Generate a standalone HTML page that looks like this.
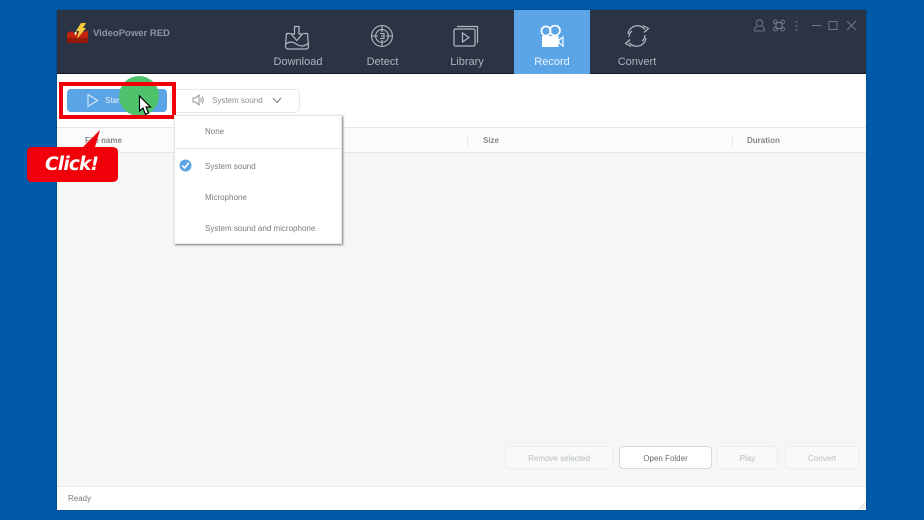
<!DOCTYPE html>
<html><head><meta charset="utf-8">
<style>
html,body{margin:0;padding:0;}
body{width:924px;height:520px;overflow:hidden;background:#0059a9;position:relative;font-family:"Liberation Sans",sans-serif;}
#w{position:absolute;left:0;top:0;width:924px;height:520px;background:#0059a9;overflow:hidden;filter:blur(.3px);}
.a{position:absolute;}
.t{position:absolute;white-space:nowrap;line-height:12px;}
.tab{position:absolute;top:56px;color:#aeb4bc;font-size:11px;line-height:12px;white-space:nowrap;transform:translateX(-50%);}
.m{position:absolute;left:205px;font-size:8px;color:#777c80;line-height:10px;white-space:nowrap;}
.b{position:absolute;top:446px;height:21px;border:1px solid #eceeee;border-radius:4px;background:#f8f9f9;color:#b9bdbf;font-size:8px;line-height:23px;text-align:center;box-sizing:content-box;}
.h{position:absolute;top:136px;font-size:8px;font-weight:bold;color:#83888c;line-height:10px;white-space:nowrap;}
</style></head>
<body>
<div id="w">
<div class="a" style="left:57px;top:10px;width:809px;height:500px;background:#fff;box-shadow:0 0 1px #123;"></div>
<div class="a" style="left:57px;top:10px;width:809px;height:64px;background:#2a3444;border-bottom:0;"></div>
<div class="a" style="left:57px;top:73px;width:809px;height:1px;background:#14181f;"></div>
<div class="a" style="left:514px;top:10px;width:76px;height:63.5px;background:#5ba4e6;"></div>

<!-- logo -->
<svg class="a" style="left:66px;top:22px" width="24" height="23" viewBox="0 0 24 23">
<path d="M1 11 L6 9 L8 11 L16 10 L22 9 L22 21 L1 21Z" fill="#c0220f"/>
<path d="M1 16 H22 V21 H1Z" fill="#8f1a0c"/>
<path d="M15 1 L20 1 L17 6 L20 6 L11 17 L13 9 L10 9Z" fill="#f4c93a"/>
<path d="M8 11 L11 9 L10 14Z" fill="#f6e9b0"/>
</svg>
<div class="t" style="left:93px;top:28px;font-size:9.5px;font-weight:bold;color:#8f96a0;">VideoPower RED</div>

<!-- tab icons -->
<svg class="a" style="left:283px;top:24px" width="28" height="28" viewBox="0 0 28 28" fill="none" stroke="#b4b9c0" stroke-width="1.2">
<path d="M11.5 2.5 H16 V10 H19.5 L13.8 16.5 L8 10 H11.5Z"/>
<path d="M7.5 9.5 H3.5 L2.5 22 Q2.5 25 5 25 H23 Q25.5 25 25.5 22 L24.5 9.5 H20.5"/>
<path d="M3 20 Q8 16 14 20.5 Q20 24 25 19.5"/>
</svg>
<svg class="a" style="left:370px;top:24px" width="24" height="24" viewBox="0 0 24 24" fill="none" stroke="#b4b9c0" stroke-width="1.1">
<circle cx="12" cy="12" r="10.4"/>
<circle cx="12" cy="12" r="6.4"/>
<path d="M12 1.5 V8 M12 16 V22.5 M1.5 12 H8 M16 12 H22.5"/>
<path d="M10 9.5 H14 V12 H11 M14 12 V14.5 H10"/>
</svg>
<svg class="a" style="left:453px;top:25px" width="27" height="22" viewBox="0 0 27 22" fill="none" stroke="#b4b9c0" stroke-width="1.2">
<rect x="1" y="4" width="21" height="17" rx="1.5"/>
<path d="M4 1.5 H24.5 V18"/>
<path d="M9.5 8 L16 12.5 L9.5 17Z"/>
</svg>
<svg class="a" style="left:540px;top:25px" width="24" height="23" viewBox="0 0 24 23">
<circle cx="6" cy="6" r="4.6" fill="none" stroke="#fff" stroke-width="1.7"/>
<circle cx="15" cy="5.5" r="5" fill="none" stroke="#fff" stroke-width="1.7"/>
<rect x="2" y="11" width="16.5" height="11" fill="#fff"/>
<path d="M19 15 L23 12 V21 L19 18Z" fill="none" stroke="#fff" stroke-width="1.2"/>
</svg>
<svg class="a" style="left:624px;top:24px" width="26" height="24" viewBox="0 0 26 24" fill="none" stroke="#b4b9c0" stroke-width="1.2">
<path d="M4 10 A9.5 9.5 0 0 1 21 5.5"/>
<path d="M19 1.5 L24.5 4.5 L20 8.5"/>
<path d="M22 14 A9.5 9.5 0 0 1 5 18.5"/>
<path d="M7 22.5 L1.5 19.5 L6 15.5"/>
<path d="M8 7 A7.5 7.5 0 0 0 5 13 M18 17 A7.5 7.5 0 0 0 21 11"/>
</svg>
<div class="tab" style="left:298px;">Download</div>
<div class="tab" style="left:382.5px;">Detect</div>
<div class="tab" style="left:467px;">Library</div>
<div class="tab" style="left:552px;color:#eaf3fc;">Record</div>
<div class="tab" style="left:637px;">Convert</div>

<!-- window controls -->
<svg class="a" style="left:752px;top:18px" width="108" height="16" viewBox="0 0 108 16" fill="none" stroke="#6f7782" stroke-width="1">
<circle cx="7.5" cy="5" r="3.2"/>
<path d="M2.5 13 Q2 9.5 5 8.5 M12.5 13 Q13 9.5 10 8.5 M2.5 13 H12.5"/>
<rect x="24" y="4.5" width="6" height="6"/>
<circle cx="23.5" cy="4" r="2"/><circle cx="30.5" cy="4" r="2"/><circle cx="23.5" cy="11" r="2"/><circle cx="30.5" cy="11" r="2"/>
<path d="M44.5 3 V4.5 M44.5 7 V8.5 M44.5 11 V12.5" stroke-width="1.6"/>
<path d="M60 7.5 H69"/>
<rect x="77" y="3.5" width="8" height="8"/>
<path d="M95 3 L104 12 M104 3 L95 12"/>
</svg>

<!-- sound dropdown -->
<div class="a" style="left:170px;top:89px;width:128px;height:22px;border:1px solid #e6e8e9;border-radius:5px;background:#fff;box-sizing:content-box;"></div>
<svg class="a" style="left:192px;top:94px" width="13" height="12" viewBox="0 0 13 12" fill="none" stroke="#8a8f94" stroke-width=".9">
<path d="M1 4 H3.5 L7 1 V11 L3.5 8 H1Z"/>
<path d="M8.5 4 Q10 6 8.5 8 M10 2.5 Q12.5 6 10 9.5"/>
</svg>
<div class="t" style="left:212px;top:95px;font-size:8px;color:#8a8f93;">System sound</div>
<svg class="a" style="left:272px;top:97px" width="10" height="7" viewBox="0 0 10 7" fill="none" stroke="#777c80" stroke-width="1"><path d="M1 1 L5 5.5 L9 1"/></svg>

<!-- table -->
<div class="a" style="left:57px;top:127px;width:809px;height:1px;background:#e4e6e7;"></div>
<div class="a" style="left:57px;top:128px;width:809px;height:24px;background:#fbfbfb;"></div>
<div class="a" style="left:57px;top:152px;width:809px;height:1px;background:#e4e6e7;"></div>
<div class="a" style="left:57px;top:153px;width:809px;height:333px;background:#f5f6f6;"></div>
<div class="a" style="left:57px;top:486px;width:809px;height:1px;background:#eceeee;"></div>
<div class="a" style="left:467px;top:134px;width:1px;height:13px;background:#e9ebec;"></div>
<div class="a" style="left:732px;top:134px;width:1px;height:13px;background:#e9ebec;"></div>
<div class="h" style="left:85px;">File name</div>
<div class="h" style="left:483px;">Size</div>
<div class="h" style="left:747px;">Duration</div>

<!-- bottom buttons -->
<div class="b" style="left:505px;width:106px;">Remove selected</div>
<div class="b" style="left:619px;width:91px;background:#fff;border-color:#d6d9da;color:#666b6f;">Open Folder</div>
<div class="b" style="left:717px;width:59px;">Play</div>
<div class="b" style="left:785px;width:72px;">Convert</div>
<div class="t" style="left:68px;top:493px;font-size:8px;color:#777c80;">Ready</div>
<svg class="a" style="left:858px;top:502px" width="8" height="8" viewBox="0 0 8 8" stroke="#c9cccd" stroke-width=".8"><path d="M1 7 L7 1 M4 7 L7 4"/></svg>

<!-- start button -->
<div class="a" style="left:67px;top:89px;width:100px;height:23px;background:#5ba4e6;border-radius:4px;"></div>
<svg class="a" style="left:86px;top:93px" width="13" height="15" viewBox="0 0 13 15" fill="none" stroke="#d5e8f9" stroke-width="1.1"><path d="M2 1.5 L11.5 7.5 L2 13.5Z"/></svg>
<div class="t" style="left:105px;top:95px;font-size:8px;color:#e6f1fb;">Start</div>
<div class="a" style="left:119px;top:75.5px;width:40px;height:40px;border-radius:50%;background:#4fc26c;"></div>

<!-- red box -->
<div class="a" style="left:59px;top:82px;width:117px;height:37px;border:4px solid #f20009;box-sizing:border-box;"></div>

<!-- cursor -->
<svg class="a" style="left:138px;top:95px" width="14" height="22" viewBox="0 0 14 22">
<path d="M1.5 1 V16 L5 13 L7.5 19.5 L10.5 18 L8 12 L12.5 12Z" fill="#fff" stroke="#000" stroke-width="1.2"/>
</svg>

<!-- menu -->
<div class="a" style="left:174px;top:115px;width:168px;height:129px;background:#fff;border:1px solid #e6e7e8;box-sizing:border-box;box-shadow:1px 1px 2px #77797b;"></div>
<div class="a" style="left:176px;top:148px;width:165px;height:1px;background:#e3e5e5;"></div>
<div class="m" style="top:127px;">None</div>
<div class="m" style="top:162px;">System sound</div>
<div class="m" style="top:193px;">Microphone</div>
<div class="m" style="top:224px;">System sound and microphone</div>
<svg class="a" style="left:179px;top:159px" width="13" height="13" viewBox="0 0 13 13">
<circle cx="6.5" cy="6.5" r="6" fill="#5ba4e6"/>
<path d="M3.2 6.5 L5.6 9 L9.8 3.8" fill="none" stroke="#fff" stroke-width="1.6"/>
</svg>

<!-- callout -->
<svg class="a" style="left:27px;top:128px" width="92" height="56" viewBox="0 0 92 56">
<path d="M5 19 H56 L73 2 L68 19 H85 Q91 19 91 24 V49 Q91 54 85 54 H5 Q0 54 0 49 V24 Q0 19 5 19Z" fill="#f20009"/>
</svg>
<div class="t" style="left:45px;top:153px;font-family:'DejaVu Sans',sans-serif;font-size:18.5px;line-height:24px;font-weight:bold;font-style:italic;color:#fff;letter-spacing:-.8px;">Click!</div>
</div>
</body></html>
